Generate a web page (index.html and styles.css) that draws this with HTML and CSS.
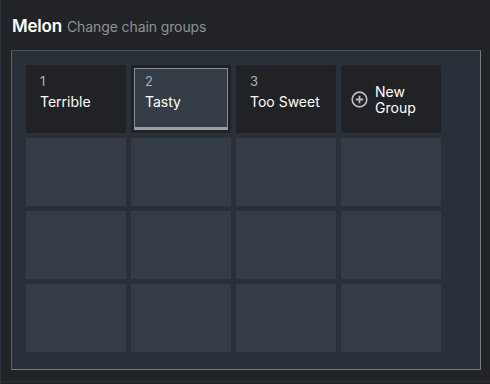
FILE: index.html
```html
<!DOCTYPE html>
<html>
<head>
<meta charset="utf-8">
<link rel="stylesheet" href="styles.css">
</head>
<body>
<div class="page">
  <div class="header">
    <span class="title">Melon</span>
    <span class="subtitle">Change chain groups</span>
  </div>
  <div class="panel">
    <div class="grid">
      <div class="cell filled"><div class="num">1</div><div class="name">Terrible</div></div>
      <div class="cell filled selected"><div class="inner"><div class="num">2</div><div class="name">Tasty</div></div></div>
      <div class="cell filled"><div class="num">3</div><div class="name">Too Sweet</div></div>
      <div class="cell filled newgroup">
        <svg class="plus" width="17" height="17" viewBox="0 0 17 17"><circle cx="8.5" cy="8.5" r="7.3" fill="none" stroke="#b8bcc2" stroke-width="1.7"/><path d="M8.5 4.8v7.4M4.8 8.5h7.4" stroke="#b8bcc2" stroke-width="1.8"/></svg>
        <div class="ng-text">New<br>Group</div>
      </div>
      <div class="cell"></div><div class="cell"></div><div class="cell"></div><div class="cell"></div>
      <div class="cell"></div><div class="cell"></div><div class="cell"></div><div class="cell"></div>
      <div class="cell"></div><div class="cell"></div><div class="cell"></div><div class="cell"></div>
    </div>
  </div>
  <div class="bottomline"></div>
</div>
</body>
</html>
```

FILE: styles.css
```css
html, body {
  margin: 0;
  padding: 0;
  background: #222326;
  width: 490px;
  height: 384px;
  overflow: hidden;
  font-family: Inter, "Noto Sans", sans-serif;
}
.page {
  height: 384px;
  border-left: 1px solid #2b323a;
  box-sizing: border-box;
  display: flex;
  flex-direction: column;
}
.header {
  padding: 16px 0 0 11px;
  height: 36px;
  box-sizing: border-box;
  display: flex;
  align-items: baseline;
  gap: 5px;
}
.title {
  color: #ffffff;
  font-weight: 600;
  font-size: 17px;
  letter-spacing: -0.2px;
}
.subtitle {
  color: #8f9297;
  font-size: 14px;
  letter-spacing: -0.1px;
}
.panel {
  margin: 14px 0 0 10px;
  width: 470px;
  height: 320px;
  box-sizing: border-box;
  background: #2a3039;
  border-top: 1px solid #4a5058;
  border-left: 1px solid #5a6068;
  border-right: 1px solid #787d84;
  border-bottom: 1px solid #787d84;
  padding: 14px 14px;
}
.grid {
  display: grid;
  grid-template-columns: repeat(4, 100px);
  grid-auto-rows: 68px;
  gap: 5px;
}
.cell {
  background: #343c46;
}
.cell.filled {
  background: #212225;
  border-radius: 2px;
  padding: 8px 14px 0 14px;
  box-sizing: border-box;
  color: #ffffff;
}
.num {
  font-size: 13px;
  color: #a6b2be;
  line-height: 16px;
}
.name {
  font-size: 14px;
  line-height: 17px;
  margin-top: 4px;
}
.cell.selected {
  padding: 3px;
}
.inner {
  height: 100%;
  box-sizing: border-box;
  background: #343c46;
  border: 1px solid #8a8f96;
  border-bottom: 3px solid #9a9ea4;
  padding: 4px 0 0 10px;
}
.newgroup {
  display: flex;
  align-items: center;
  gap: 7px;
  padding: 0 0 0 10px !important;
}
.ng-text {
  font-size: 14px;
  line-height: 16px;
  margin-top: 1px;
}
.bottomline {
  margin-top: 11px;
  height: 1px;
  background: #2e2f33;
}
```
